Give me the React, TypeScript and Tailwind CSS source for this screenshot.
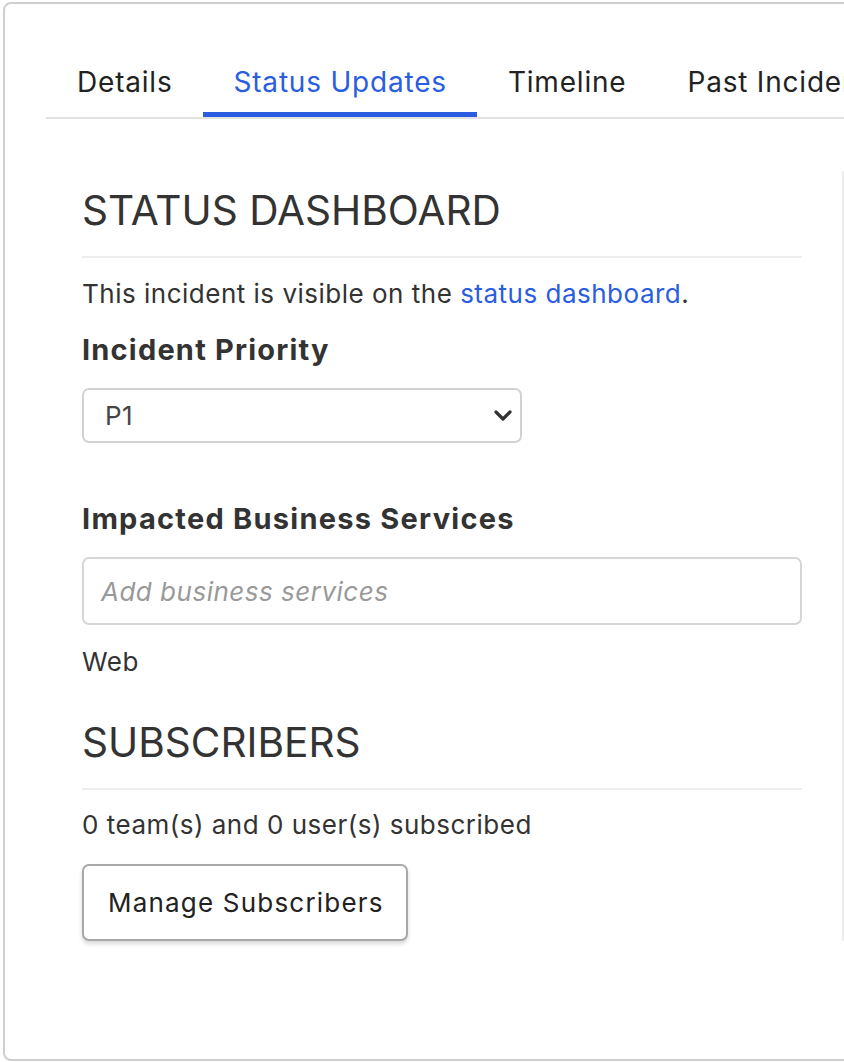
import { useState } from 'react'

const tabs = ['Details', 'Status Updates', 'Timeline', 'Past Incidents']

function Chevron() {
  return (
    <svg width="18" height="12" viewBox="0 0 18 12" className="shrink-0">
      <polyline points="2,2 9,9 16,2" fill="none" stroke="#333" strokeWidth="3.2" strokeLinecap="round" strokeLinejoin="round" />
    </svg>
  )
}

const App = () => {
  const [active, setActive] = useState('Status Updates')

  return (
    <div className="w-[844px] h-[1062px] overflow-hidden bg-white" style={{ fontFamily: 'Inter, "Noto Sans", sans-serif' }}>
      <div className="ml-[3px] mt-[2px] w-[900px] h-[1059px] border-2 border-[#cfcfcf] rounded-[8px] bg-white pl-[41px] pt-[62px]">
        {/* tabs */}
        <ul className="flex border-b-2 border-[#e2e2e2]">
          {tabs.map((t) => (
            <li
              key={t}
              onClick={() => setActive(t)}
              className={
                'pl-[31px] pr-[30px] pb-[14px] text-[28px] leading-[32px] tracking-[0.8px] whitespace-nowrap border-b-[5px] cursor-pointer ' +
                (active === t ? 'text-[#2a5de0] border-[#2a5de0]' : 'text-[#222] border-transparent')
              }
            >
              {t}
            </li>
          ))}
        </ul>

        <div className="flex pl-[36px] pt-[52px]">
          {/* main column */}
          <div className="w-[720px] text-[#333] text-[26px] tracking-[0.5px]">
            <h2 className="mt-[16px] pb-[21px] border-b-2 border-[#eeeeee] text-[40.6px] leading-[48px] tracking-normal font-normal">
              STATUS DASHBOARD
            </h2>
            <p className="mt-[18px] leading-[36px]">
              This incident is visible on the <a className="text-[#2a5de0]">status dashboard</a>.
            </p>

            <h3 className="mt-[20px] text-[29px] leading-[36px] tracking-[1.2px] font-bold">Incident Priority</h3>
            <div className="mt-[20px] w-[440px] h-[55px] border-2 border-[#d2d2d2] rounded-[7px] flex items-center justify-between pl-[21px] pr-[8px]">
              <span className="text-[#444]">P1</span>
              <Chevron />
            </div>

            <h3 className="mt-[58px] text-[29px] leading-[36px] tracking-[1.25px] font-bold">Impacted Business Services</h3>
            <div className="mt-[20px] w-[720px] h-[68px] border-2 border-[#d6d6d6] rounded-[7px] flex items-center pl-[17px]">
              <span className="italic text-[#999]">Add business services</span>
            </div>
            <p className="mt-[19px] leading-[36px]">Web</p>

            <h2 className="mt-[39px] pb-[21px] border-b-2 border-[#eeeeee] text-[40.6px] leading-[48px] tracking-normal font-normal">
              SUBSCRIBERS
            </h2>
            <p className="mt-[17px] leading-[36px]">0 team(s) and 0 user(s) subscribed</p>
            <button className="mt-[21px] h-[77px] pl-[24px] pr-[22px] border-2 border-[#a8a8a8] rounded-[7px] bg-white text-[26px] tracking-[1.2px] text-[#222] shadow-[0_3px_4px_rgba(0,0,0,0.15)]">
              Manage Subscribers
            </button>
          </div>

          {/* side column */}
          <div className="ml-[40px] w-[60px] border-l-2 border-[#eeeeee]" />
        </div>
      </div>
    </div>
  )
}

export default App
